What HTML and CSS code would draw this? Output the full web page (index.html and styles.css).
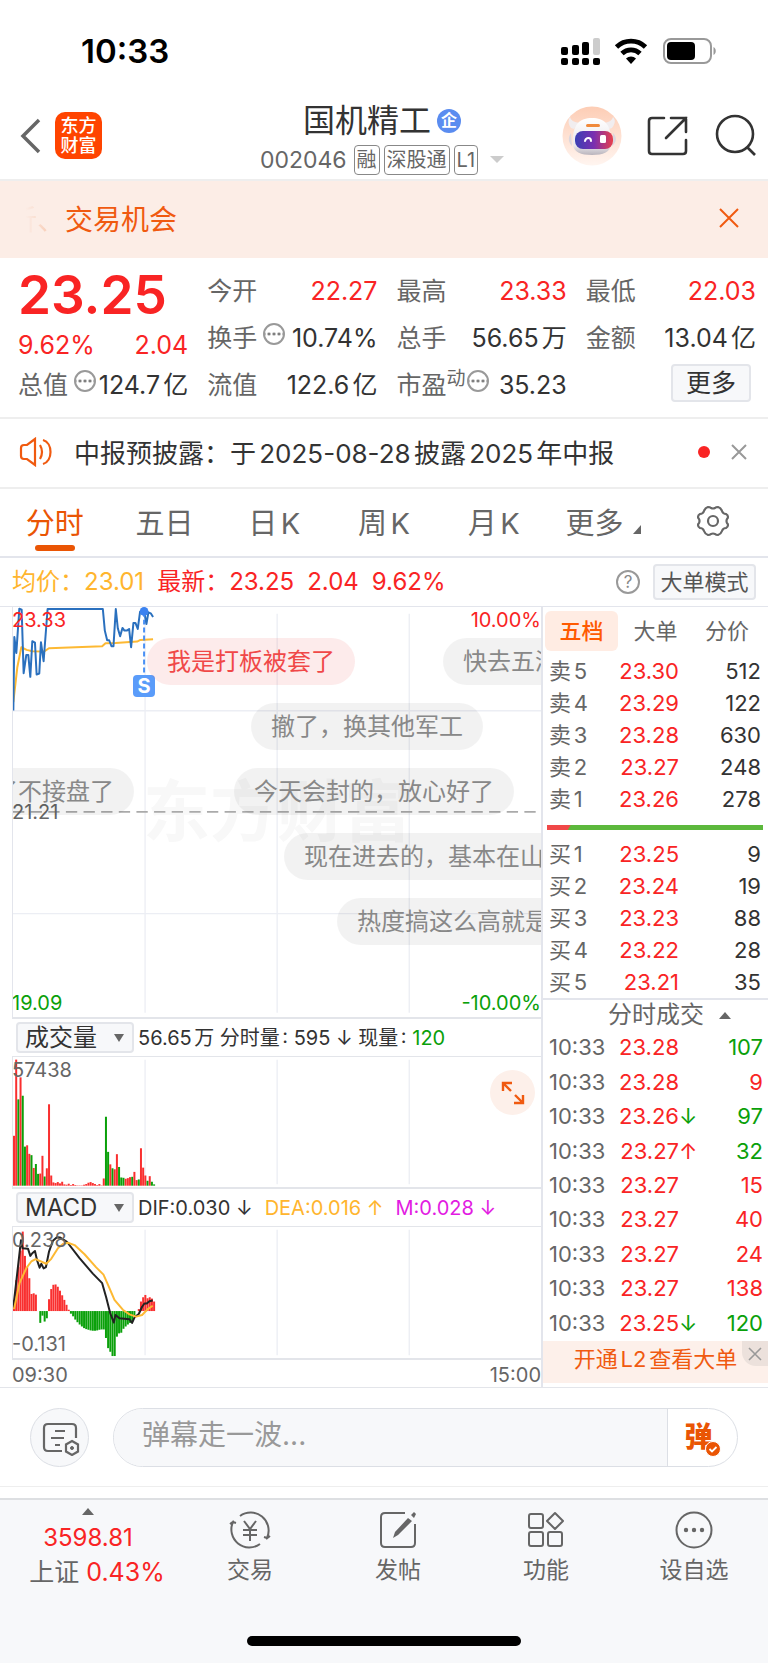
FILE: index.html
```html
<!DOCTYPE html>
<html lang="zh-CN">
<head>
  <meta charset="UTF-8">
  <meta name="viewport" content="width=device-width, initial-scale=1.0">
  <title>国机精工 002046</title>
  <link rel="stylesheet" href="styles.css">
</head>
<body>
  <div class="status-bar">
    <span class="clock">10:33</span>
    <svg class="status-icons" width="156" height="32" viewBox="0 0 156 32">
      <rect x="0" y="12" width="7" height="8" rx="2"/>
      <rect x="11" y="10" width="7" height="10" rx="2"/>
      <rect x="21" y="7" width="7" height="13" rx="2"/>
      <rect x="32" y="3" width="7" height="17" rx="2" fill="#ccc"/>
      <rect x="0" y="23" width="7" height="7" rx="2"/>
      <rect x="11" y="23" width="7" height="7" rx="2"/>
      <rect x="21" y="23" width="7" height="7" rx="2"/>
      <rect x="32" y="23" width="7" height="7" rx="2"/>
      <path d="M55.500 12a21 21 0 0 1 29 0M61 18.500a13 13 0 0 1 18 0" fill="none" stroke="#000" stroke-width="4.800"/>
      <path d="M65 23.500a7.500 7.500 0 0 1 10 0l-5 5.500z"/>
      <rect x="103" y="4" width="47" height="24" rx="7" fill="none" stroke="#999" stroke-width="2"/>
      <rect x="106" y="7" width="28" height="18" rx="4"/>
      <path d="M152.500 12c3 1.500 3 6.500 0 8z" fill="#999"/>
    </svg>
  </div>

  <header class="header">
    <a href="#" class="back" aria-label="返回">
      <svg width="22" height="36" viewBox="0 0 22 36"><path d="M19 2L3 18l16 16" fill="none" stroke="#666" stroke-width="3.500"/></svg>
    </a>
    <a href="#" class="logo"><span>东方</span><span>财富</span></a>
    <div class="title">
      <h1>国机精工 <span class="corp">企</span></h1>
      <div class="code">
        <span class="num">002046</span>
        <span class="tag">融</span>
        <span class="tag">深股通</span>
        <span class="tag">L1</span>
        <i class="caret"></i>
      </div>
    </div>
    <div class="header-actions">
      <button class="icon-btn" aria-label="智能助手">
        <svg width="60" height="60" viewBox="0 0 60 60">
          <defs>
            <linearGradient id="halo" x1="0" y1="0" x2="0" y2="1">
              <stop offset="0" stop-color="#fdcdb5"/>
              <stop offset="1" stop-color="#fff5f0"/>
            </linearGradient>
            <linearGradient id="visor" x1="0" y1="0" x2="1" y2="0">
              <stop offset="0" stop-color="#3a3fb4"/>
              <stop offset=".5" stop-color="#7a2fb0"/>
              <stop offset="1" stop-color="#e8404c"/>
            </linearGradient>
            <linearGradient id="shell" x1="0" y1="0" x2="0" y2="1">
              <stop offset="0" stop-color="#fff"/>
              <stop offset=".75" stop-color="#e9e6ea"/>
              <stop offset="1" stop-color="#b9b4bc"/>
            </linearGradient>
          </defs>
          <circle cx="30" cy="30" r="29.500" fill="url(#halo)"/>
          <path d="M9 22c-3-4-3-8-1-11 1 4 5 5 9 6l-5 6zM50 22c3-4 4-8 1-11-1 4-5 5-8 6l4 6z" fill="#f1edef"/>
          <path d="M11 38C10 18 18 12 30 12s20 6 19 26c0 8-8 11-19 11S11 46 11 38z" fill="url(#shell)"/>
          <path d="M9 27c-3 4-3 9 1 13zM51 27c4 4 4 9-1 13z" fill="#dcd7de"/>
          <rect x="24" y="18" width="14" height="3" rx="1.500" fill="#f08a3c"/>
          <rect x="13" y="25" width="38" height="18" rx="8" fill="url(#visor)"/>
          <path d="M23 35c1-4 6-4 6 0" fill="none" stroke="#fff" stroke-width="2" stroke-linecap="round"/>
          <rect x="38" y="29" width="6" height="8" rx="1.500" fill="#fff"/>
        </svg>
      </button>
      <button class="icon-btn" aria-label="分享">
        <svg width="44" height="44" viewBox="0 0 44 44"><path d="M18 4H6q-3 0-3 3v30q0 3 3 3h31q3 0 3-3V26M25 4h15v14M40 4L20 24" fill="none" stroke="#333" stroke-width="2.600" stroke-linecap="round"/></svg>
      </button>
      <button class="icon-btn" aria-label="搜索">
        <svg width="44" height="44" viewBox="0 0 44 44"><circle cx="21" cy="20" r="18" fill="none" stroke="#333" stroke-width="2.600"/><path d="M33 33l8 8" stroke="#333" stroke-width="2.600"/></svg>
      </button>
    </div>
  </header>

  <div class="promo">
    <p><span class="fade">析、</span>交易机会</p>
    <button class="icon-btn" aria-label="关闭">
      <svg width="20" height="20" viewBox="0 0 20 20"><path d="M1 1l18 18M19 1L1 19" stroke="#f05a10" stroke-width="2"/></svg>
    </button>
  </div>

  <section class="quote">
    <div class="quote-col">
      <div class="price">23.25</div>
      <div class="change"><span>9.62%</span><span>2.04</span></div>
      <dl class="pair"><dt>总值 <i class="dots"></i></dt><dd>124.7亿</dd></dl>
    </div>
    <div class="quote-col">
      <dl class="pair"><dt>今开</dt><dd class="red">22.27</dd></dl>
      <dl class="pair"><dt>换手 <i class="dots"></i></dt><dd>10.74%</dd></dl>
      <dl class="pair"><dt>流值</dt><dd>122.6亿</dd></dl>
    </div>
    <div class="quote-col">
      <dl class="pair"><dt>最高</dt><dd class="red">23.33</dd></dl>
      <dl class="pair"><dt>总手</dt><dd>56.65万</dd></dl>
      <dl class="pair"><dt>市盈<sup>动</sup><i class="dots"></i></dt><dd>35.23</dd></dl>
    </div>
    <div class="quote-col">
      <dl class="pair"><dt>最低</dt><dd class="red">22.03</dd></dl>
      <dl class="pair"><dt>金额</dt><dd>13.04亿</dd></dl>
      <button class="btn more-btn">更多</button>
    </div>
  </section>

  <div class="notice">
    <svg width="34" height="30" viewBox="0 0 34 30" fill="none" stroke="#f05a10" stroke-width="2.200">
      <path d="M17 2L9 8H6q-3 0-3 3v8q0 3 3 3h3l8 6zM22 8q4 7 0 14M25 3c10 3 10 21 0 24"/>
    </svg>
    <p>中报预披露：于2025-08-28披露2025年中报</p>
    <i class="dot"></i>
    <button class="icon-btn" aria-label="关闭公告">
      <svg width="16" height="16" viewBox="0 0 16 16"><path d="M1 1l14 14M15 1L1 15" stroke="#999" stroke-width="2"/></svg>
    </button>
  </div>

  <nav class="period">
    <button class="active">分时</button>
    <button>五日</button>
    <button>日K</button>
    <button>周K</button>
    <button>月K</button>
    <button>更多<i class="corner"></i></button>
    <button aria-label="设置">
      <svg width="34" height="32" viewBox="0 0 34 32" fill="none" stroke="#666" stroke-width="2.200" stroke-linejoin="round">
        <path d="M12 2q2 0 3 1 2 1 4 0 1-1 3-1 3 1 4 4 1 3 4 3 2 1 2 3 0 1-1 2-1 2 0 4 1 1 1 2 0 2-2 3-3 0-4 3-1 3-4 4-2 0-3-1-2-1-4 0-1 1-3 1-3-1-4-4-1-3-4-3-2-1-2-3 0-1 1-2 1-2 0-4-1-1-1-2 0-2 2-3 3 0 4-3 1-3 4-4z"/>
        <circle cx="17" cy="16" r="5"/>
      </svg>
    </button>
  </nav>

  <div class="summary">
    <span class="avg">均价：23.01</span>
    <span>最新：23.25</span>
    <span>2.04</span>
    <span>9.62%</span>
    <button class="help" aria-label="帮助">?</button>
    <button class="btn mode-btn">大单模式</button>
  </div>

  <main class="board">
    <div class="charts">
      <div class="chart price-chart">
        <div class="watermark">东方财富</div>
        <svg viewBox="0 0 1587 1233" preserveAspectRatio="none">
          <path class="grid" d="M397 20V1220M794 20V1220M1191 20V1220M0 312H1587M0 922H1587"/>
          <path class="mid" d="M0 616H1587"/>
          <polyline class="line avg-line" points="1,286 13,181 25,121 41,129 58,133 93,134 108,124 268,118 278,109 308,108 373,104 383,99 421,97"/>
          <polyline class="line price-line" points="1,311 4,90 10,138 19,5 26,8 32,199 40,144 46,144 52,210 58,103 66,107 71,203 79,200 84,106 92,163 104,6 270,6 276,71 283,100 289,100 296,118 302,118 309,6 315,64 322,88 329,63 335,71 342,71 349,66 355,121 362,48 368,48 375,66 382,14 394,12 401,51 407,16 414,19 421,30"/>
          <path class="trade-mark" d="M394 14V206"/>
          <circle cx="394" cy="13" r="13" fill="#3b82f0"/>
        </svg>
        <span class="axis top left red">23.33</span>
        <span class="axis top right red">10.00%</span>
        <span class="axis middle left">21.21</span>
        <span class="axis bottom left green">19.09</span>
        <span class="axis bottom right green">-10.00%</span>
        <span class="sell">S</span>
        <span class="bullet b1 mine">我是打板被套了</span>
        <span class="bullet b2">快去五洲新春</span>
        <span class="bullet b3">撤了，换其他军工</span>
        <span class="bullet b4">了不接盘了</span>
        <span class="bullet b5">今天会封的，放心好了</span>
        <span class="bullet b6">现在进去的，基本在山顶</span>
        <span class="bullet b7">热度搞这么高就是要跌</span>
      </div>

      <div class="toolbar">
        <div class="picker">
          <select aria-label="指标一"><option>成交量</option><option>成交额</option></select>
        </div>
        <span>56.65万 分时量: 595 ↓ 现量: <b class="green">120</b></span>
      </div>
      <div class="chart volume-chart">
        <svg viewBox="0 0 1587 396" preserveAspectRatio="none">
          <path class="grid" d="M397 8V388M794 8V388M1191 8V388"/>
          <g id="volumeBars"></g>
        </svg>
        <span class="axis top left">57438</span>
        <button class="expand" aria-label="全屏">
          <svg width="24" height="24" viewBox="0 0 24 24" fill="none" stroke="#f05a10" stroke-width="2.400"><path d="M2 10V2h9M2 2l8 8M22 14v8h-9M22 22l-8-8"/></svg>
        </button>
      </div>

      <div class="toolbar">
        <div class="picker">
          <select aria-label="指标二"><option>MACD</option><option>KDJ</option></select>
        </div>
        <span>DIF:0.030 ↓</span>
        <span class="avg">DEA:0.016 ↑</span>
        <span class="magenta">M:0.028 ↓</span>
      </div>
      <div class="chart macd-chart">
        <svg viewBox="0 0 1587 399" preserveAspectRatio="none">
          <path class="grid" d="M397 8V391M794 8V391M1191 8V391"/>
          <g id="macdBars"></g>
          <polyline class="line dif-line" points="1,245 10,165 24,40 29,65 45,66 52,88 58,80 66,73 72,100 80,124 85,112 92,126 99,122 108,76 120,42 132,31 142,32 162,45 200,95 240,142 268,171 280,214 292,262 303,291 308,268 320,278 350,281 358,292 366,274 378,265 388,243 395,233 402,233 410,226 420,224"/>
          <polyline class="line avg-line" points="3,250 20,170 40,125 55,105 68,98 100,112 115,97 135,65 150,52 165,48 185,55 215,83 250,123 272,145 285,175 305,222 330,252 350,266 370,273 388,268 405,250 420,240"/>
        </svg>
        <span class="axis top left">0.238</span>
        <span class="axis bottom left">-0.131</span>
      </div>
      <div class="times"><span>09:30</span><span>15:00</span></div>
    </div>

    <aside class="depth">
      <div class="depth-tabs">
        <button class="active">五档</button>
        <button>大单</button>
        <button>分价</button>
      </div>
      <table class="levels">
        <tr><th>卖5</th><td class="red">23.30</td><td></td><td>512</td></tr>
        <tr><th>卖4</th><td class="red">23.29</td><td></td><td>122</td></tr>
        <tr><th>卖3</th><td class="red">23.28</td><td></td><td>630</td></tr>
        <tr><th>卖2</th><td class="red">23.27</td><td></td><td>248</td></tr>
        <tr><th>卖1</th><td class="red">23.26</td><td></td><td>278</td></tr>
      </table>
      <div class="ratio"></div>
      <table class="levels">
        <tr><th>买1</th><td class="red">23.25</td><td></td><td>9</td></tr>
        <tr><th>买2</th><td class="red">23.24</td><td></td><td>19</td></tr>
        <tr><th>买3</th><td class="red">23.23</td><td></td><td>88</td></tr>
        <tr><th>买4</th><td class="red">23.22</td><td></td><td>28</td></tr>
        <tr><th>买5</th><td class="red">23.21</td><td></td><td>35</td></tr>
      </table>
      <h2 class="ticks-title">分时成交 <i class="up"></i></h2>
      <table class="ticks">
        <tr><th>10:33</th><td class="red">23.28</td><td></td><td class="green">107</td></tr>
        <tr><th>10:33</th><td class="red">23.28</td><td></td><td class="red">9</td></tr>
        <tr><th>10:33</th><td class="red">23.26</td><td class="green">↓</td><td class="green">97</td></tr>
        <tr><th>10:33</th><td class="red">23.27</td><td class="red">↑</td><td class="green">32</td></tr>
        <tr><th>10:33</th><td class="red">23.27</td><td></td><td class="red">15</td></tr>
        <tr><th>10:33</th><td class="red">23.27</td><td></td><td class="red">40</td></tr>
        <tr><th>10:33</th><td class="red">23.27</td><td></td><td class="red">24</td></tr>
        <tr><th>10:33</th><td class="red">23.27</td><td></td><td class="red">138</td></tr>
        <tr><th>10:33</th><td class="red">23.25</td><td class="green">↓</td><td class="green">120</td></tr>
      </table>
      <div class="level2">
        <a href="#">开通L2查看大单</a>
        <button class="level2-close" aria-label="关闭">
          <svg width="14" height="14" viewBox="0 0 14 14"><path d="M1 1l12 12M13 1L1 13" stroke="#999" stroke-width="1.600"/></svg>
        </button>
      </div>
    </aside>
  </main>

  <form class="comment">
    <button type="button" class="comment-set" aria-label="弹幕设置">
      <svg width="38" height="34" viewBox="0 0 38 34" fill="none" stroke="#666" stroke-width="2.200">
        <path d="M20 29H6q-4 0-4-4V6q0-4 4-4h24q4 0 4 4v10M13 9h10M9 16h13M13 23h5"/>
        <path d="M30 19l6 3.500v7L30 33l-6-3.500v-7z"/>
        <circle cx="30" cy="26" r="1.500" fill="#666" stroke-width="1"/>
      </svg>
    </button>
    <div class="comment-box">
      <input type="text" placeholder="弹幕走一波..." aria-label="弹幕">
      <button type="button" class="send" aria-label="弹幕开关">弹
        <svg width="16" height="16" viewBox="0 0 16 16"><circle cx="8" cy="8" r="7.500" fill="#ea5504" stroke="#fff"/><path d="M4.500 8l2.500 2.500 4.500-4.500" fill="none" stroke="#fff" stroke-width="1.800"/></svg>
      </button>
    </div>
  </form>

  <footer class="tabbar">
    <a href="#" class="index">
      <i class="up"></i>
      <span class="red">3598.81</span>
      <span class="index-row">上证 <span class="red">0.43%</span></span>
    </a>
    <a href="#">
      <svg width="44" height="40" viewBox="0 0 44 40" fill="none" stroke="#666" stroke-width="2">
        <path d="M12 6a18 18 0 0 1 27 22l-3-1M32 34A18 18 0 0 1 5 12l3 1M2 14l4-3M42 26l-4 3"/>
        <path d="M16 11l6 8 6-8M22 19v12M15 20h14M15 25h14"/>
      </svg>
      交易
    </a>
    <a href="#">
      <svg width="40" height="40" viewBox="0 0 40 40" fill="none" stroke="#666" stroke-width="2">
        <path d="M27 3H7Q3 3 3 7v26q0 4 4 4h26q4 0 4-4V14"/>
        <path d="M30 8l4 3-14 14-5 3 2-6zM33 5l3-3 2 2-2 4z" fill="#666" stroke="none"/>
      </svg>
      发帖
    </a>
    <a href="#">
      <svg width="38" height="40" viewBox="0 0 38 40" fill="none" stroke="#666" stroke-width="2">
        <rect x="2" y="4" width="14" height="14" rx="2"/>
        <rect x="2" y="22" width="14" height="14" rx="2"/>
        <rect x="21" y="22" width="14" height="14" rx="2"/>
        <path d="M28 3l8 8-8 8-8-8z" stroke-linejoin="round"/>
      </svg>
      功能
    </a>
    <a href="#">
      <svg width="40" height="40" viewBox="0 0 40 40"><circle cx="20" cy="20" r="17.500" fill="none" stroke="#666" stroke-width="2"/><g fill="#666"><circle cx="12" cy="20" r="2.200"/><circle cx="20" cy="20" r="2.200"/><circle cx="28" cy="20" r="2.200"/></g></svg>
      设自选
    </a>
    <div class="home-bar"></div>
  </footer>

  <script src="script.js"></script>
</body>
</html>
```

FILE: styles.css
```css
* {
  box-sizing: border-box;
}
body {
  margin: 0;
  font-family: Inter, "Noto Sans CJK SC", sans-serif;
  font-size: 22px;
  color: #333;
  background-color: #fff;
  text-autospace: normal;
}
h1, h2, p, dl, dd {
  margin: 0;
  font-weight: 400;
}
a {
  color: inherit;
  text-decoration: none;
}
button, input, select {
  font-family: inherit;
  font-size: inherit;
  color: inherit;
  margin: 0;
  padding: 0;
  border: none;
  background: none;
}
svg {
  display: block;
}
.red {
  color: #f92424;
}
.green {
  color: #0aa00a;
}
.avg {
  color: #ffb52e;
}
.magenta {
  color: #e21be2;
}
.icon-btn {
  display: flex;
}
.btn {
  background-color: #f7f8fa;
  border: 2px solid #e3e5ea;
  border-radius: 4px;
}

/* Status bar */
.status-bar {
  display: flex;
  justify-content: space-between;
  align-items: center;
  height: 92px;
  padding: 10px 51px 0 81px;
}
.clock {
  font-size: 33px;
  font-weight: 600;
  color: #000;
}

/* Header */
.header {
  display: grid;
  grid-template-columns: 1fr auto 1fr;
  grid-template-areas: "left title right";
  align-items: center;
  height: 89px;
  padding: 0 10px 0 20px;
  border-bottom: 2px solid #eee;
}
.back {
  grid-area: left;
}
.logo {
  grid-area: left;
  display: flex;
  flex-direction: column;
  justify-content: center;
  width: 47px;
  height: 47px;
  margin-left: 35px;
  border-radius: 10px;
  background-color: #ff4400;
  color: #fff;
  font-size: 18px;
  font-weight: 500;
  line-height: 20px;
  text-align: center;
}
.title {
  grid-area: title;
  padding: 4px 14px 0 0;
}
.title h1 {
  display: flex;
  justify-content: center;
  align-items: center;
  gap: 6px;
  font-size: 32px;
  line-height: 40px;
}
.corp {
  width: 24px;
  height: 24px;
  border-radius: 50%;
  background-color: #5a8cf0;
  color: #fff;
  font-size: 16px;
  font-weight: 700;
  line-height: 23px;
  text-align: center;
}
.code {
  display: flex;
  align-items: center;
  gap: 4px;
  padding-top: 4px;
  color: #666;
  line-height: 28px;
}
.code .num {
  font-size: 23px;
  margin-right: 3px;
}
.tag {
  padding: 0 2px;
  border: 1px solid #888;
  border-radius: 4px;
  font-size: 20px;
}
.caret {
  margin-left: 8px;
  border: 7px solid transparent;
  border-top-color: #ccc;
  border-bottom: none;
}
.header-actions {
  grid-area: right;
  display: flex;
  justify-content: flex-end;
  align-items: center;
  gap: 24px;
}

/* Promo */
.promo {
  display: flex;
  justify-content: space-between;
  align-items: center;
  height: 77px;
  padding: 0 29px 3px 9px;
  background-color: #fcede6;
  color: #f05a10;
  font-size: 28px;
}
.fade {
  background: linear-gradient(90deg, transparent 30%, #f7b795);
  background-clip: text;
  -webkit-background-clip: text;
  color: transparent;
}

/* Quote */
.quote {
  display: grid;
  grid-template-columns: repeat(4, 1fr);
  column-gap: 19px;
  height: 161px;
  padding: 10px 12px 0 18px;
  border-bottom: 2px solid #eee;
  font-size: 25px;
}
.price {
  height: 54px;
  font-size: 53px;
  font-weight: 600;
  line-height: 54px;
  color: #f92424;
}
.change {
  display: flex;
  justify-content: space-between;
  height: 40px;
  line-height: 46px;
  color: #f92424;
}
.pair {
  display: flex;
  justify-content: space-between;
  height: 47px;
  line-height: 47px;
  white-space: nowrap;
}
.pair dt {
  display: flex;
  color: #666;
}
.pair sup {
  font-size: 19px;
  line-height: 34px;
}
.dots {
  width: 22px;
  height: 22px;
  margin: 8px -2px 0 6px;
  border: 2px solid #999;
  border-radius: 50%;
  background: radial-gradient(circle, #777 1px, transparent 2px) 50% 50% / 5px 18px repeat-x;
}
.pair sup + .dots {
  margin-left: 1px;
}
.more-btn {
  display: block;
  width: 80px;
  height: 38px;
  margin: 2px 5px 0 auto;
  line-height: 31px;
}

/* Notice */
.notice {
  display: flex;
  align-items: center;
  height: 70px;
  padding: 0 21px 2px 18px;
  border-bottom: 2px solid #eee;
}
.notice p {
  flex: 1;
  padding-left: 22px;
  padding-bottom: 2px;
  font-size: 26px;
}
.dot {
  width: 12px;
  height: 12px;
  margin-right: 21px;
  border-radius: 50%;
  background-color: #f92424;
}

/* Period tabs */
.period {
  display: grid;
  grid-template-columns: repeat(7, 1fr);
  height: 69px;
  border-bottom: 2px solid #e3e5ec;
  font-size: 29px;
  color: #666;
}
.period button {
  position: relative;
  height: 67px;
  padding-bottom: 3px;
}
.period svg {
  margin: 0 auto;
}
.period .active {
  color: #ea5504;
}
.period .active::after {
  content: "";
  position: absolute;
  left: 50%;
  bottom: 5px;
  width: 40px;
  height: 6px;
  margin-left: -20px;
  border-radius: 3px;
  background-color: #ea5504;
}
.corner {
  display: inline-block;
  margin-left: 10px;
  border-left: 8px solid transparent;
  border-bottom: 9px solid #666;
}

/* Summary */
.summary {
  display: flex;
  align-items: center;
  gap: 13px;
  height: 48px;
  padding: 0 12px;
  font-size: 24px;
  line-height: 48px;
  color: #f92424;
}
.help {
  width: 24px;
  height: 24px;
  margin-left: auto;
  border: 2px solid #999;
  border-radius: 50%;
  font-size: 17px;
  line-height: 18px;
  color: #888;
}
.mode-btn {
  width: 103px;
  height: 36px;
  font-size: 22px;
  line-height: 29px;
  color: #555;
}

/* Charts */
.board {
  display: grid;
  grid-template-columns: 1fr 227px;
  border-top: 1px solid #e3e5ec;
  border-bottom: 1px solid #e3e5ea;
}
.charts {
  min-width: 0;
  padding-left: 12px;
}
.chart {
  position: relative;
  overflow: hidden;
  border-left: 1px solid #e3e5ec;
  border-bottom: 2px solid #e3e5ea;
}
.chart svg {
  width: 100%;
  height: 100%;
}
.price-chart {
  height: 412px;
}
.volume-chart {
  height: 133px;
}
.macd-chart {
  height: 134px;
}
.volume-chart,
.macd-chart {
  border-top: 1px solid #e3e5ea;
}
.grid {
  stroke: #eceef4;
  stroke-width: 4;
  fill: none;
}
.mid {
  stroke: #aaa;
  stroke-width: 5;
  stroke-dasharray: 34 19;
}
.line {
  fill: none;
  stroke-width: 6;
  stroke-linejoin: round;
}
.price-line {
  stroke: #2a70be;
}
.avg-line {
  stroke: #fdb933;
}
.dif-line {
  stroke: #222;
}
.trade-mark {
  stroke: #4a90f5;
  stroke-width: 6;
  stroke-dasharray: 15 9;
}
.up-bar {
  fill: #f92f2f;
}
.down-bar {
  fill: #0aa00a;
}
.watermark {
  position: absolute;
  left: 130px;
  top: 160px;
  font-size: 67px;
  font-weight: 700;
  line-height: 90px;
  color: #f8f8f8;
}
.price-chart svg {
  position: relative;
}
.axis {
  position: absolute;
  font-size: 20px;
  line-height: 24px;
}
.axis:not(.red):not(.green) {
  color: #666;
}
.top {
  top: 1px;
}
.middle {
  top: 193px;
}
.bottom {
  bottom: 2px;
}
.left {
  left: -1px;
}
.right {
  right: 0;
}
.sell {
  position: absolute;
  left: 120px;
  top: 68px;
  width: 22px;
  height: 22px;
  border-radius: 4px;
  background-color: #5a9cfa;
  color: #fff;
  font-size: 20px;
  font-weight: 700;
  line-height: 22px;
  text-align: center;
}
.bullet {
  position: absolute;
  height: 47px;
  padding: 0 20px;
  border-radius: 24px;
  background-color: rgba(0, 0, 0, 0.05);
  color: #888;
  font-size: 24px;
  line-height: 47px;
  white-space: nowrap;
}
.mine {
  background-color: rgba(240, 60, 60, 0.1);
  color: #f04848;
}
.b1, .b2 {
  top: 31px;
}
.b1 {
  left: 134px;
}
.b2 {
  left: 430px;
}
.b3 {
  top: 96px;
  left: 238px;
}
.b4, .b5 {
  top: 161px;
}
.b4 {
  left: -39px;
}
.b5 {
  left: 221px;
}
.b6 {
  top: 226px;
  left: 271px;
}
.b7 {
  top: 291px;
  left: 324px;
}
.toolbar {
  display: flex;
  align-items: center;
  gap: 12px;
  height: 37px;
  padding-left: 4px;
  font-size: 20px;
  line-height: 30px;
  white-space: nowrap;
}
.toolbar b {
  font-weight: 400;
}
.picker {
  position: relative;
  margin-right: -8px;
}
.picker::after {
  content: "";
  position: absolute;
  right: 10px;
  top: 12px;
  border: 5px solid transparent;
  border-top: 8px solid #666;
  border-bottom: none;
}
.picker select {
  appearance: none;
  display: block;
  width: 118px;
  height: 31px;
  padding-left: 7px;
  border: 2px solid #e3e5ea;
  border-radius: 4px;
  background-color: #f7f8fa;
  font-size: 24px;
  line-height: 27px;
}
.expand {
  position: absolute;
  right: 6px;
  top: 13px;
  display: flex;
  justify-content: center;
  align-items: center;
  width: 45px;
  height: 45px;
  border-radius: 50%;
  background-color: #fdf0ea;
}
.expand svg {
  width: 24px;
  height: 24px;
}
.times {
  display: flex;
  justify-content: space-between;
  height: 27px;
  line-height: 30px;
  font-size: 20px;
  color: #666;
}

/* Depth */
.depth {
  display: flex;
  flex-direction: column;
  border-left: 2px solid #e3e5ec;
}
.depth-tabs {
  display: flex;
  justify-content: space-between;
  height: 48px;
  padding: 4px 7px 4px 2px;
  color: #666;
}
.depth-tabs button {
  width: 68px;
  padding-bottom: 5px;
}
.depth-tabs .active {
  width: 73px;
  border-radius: 6px;
  background-color: #ffece3;
  color: #ff5a00;
  font-weight: 500;
}
table {
  table-layout: fixed;
  width: 100%;
  padding: 0 7px 0 6px;
  border-spacing: 0;
  font-size: 22px;
}
th, td {
  padding: 0;
  text-align: right;
  line-height: 30px;
}
th {
  width: 60px;
  font-weight: 400;
  text-align: left;
  color: #666;
}
td:nth-child(2) {
  width: 70px;
}
td:nth-child(3) {
  width: 15px;
}
.levels tr {
  height: 32px;
}
.ratio {
  height: 5px;
  margin: 10px 5px 8px 4px;
  background: linear-gradient(120deg, #f04848 20px, #5cb83c 21px);
}
.ticks-title {
  display: flex;
  justify-content: center;
  align-items: center;
  gap: 15px;
  height: 32px;
  padding-left: 28px;
  border-top: 2px solid #e3e5ec;
  font-size: 24px;
  line-height: 28px;
  color: #666;
}
.ticks {
  flex: 1;
  height: 311px;
  padding: 0 5px 1px 6px;
}
.up {
  border: 6px solid transparent;
  border-top: none;
  border-bottom: 7px solid #666;
}
.level2 {
  position: relative;
  height: 42px;
  margin-bottom: 4px;
  background-color: #fdf0ea;
  color: #f05a10;
  line-height: 37px;
  text-align: center;
}
.level2-close {
  position: absolute;
  top: 0;
  right: 0;
  display: flex;
  justify-content: center;
  align-items: center;
  width: 26px;
  height: 25px;
  border-bottom-left-radius: 14px;
  background-color: #ece1dc;
}

/* Comment */
.comment {
  display: flex;
  align-items: center;
  gap: 24px;
  height: 99px;
  padding: 0 30px;
  border-bottom: 1px solid #eee;
}
.comment-set {
  display: flex;
  justify-content: center;
  align-items: center;
  width: 59px;
  height: 59px;
  padding: 4px 0 0 3px;
  border: 1px solid #dcdfe5;
  border-radius: 50%;
  background-color: #f7f8fa;
}
.comment-box {
  flex: 1;
  display: flex;
  height: 59px;
  border: 1px solid #dcdfe5;
  border-radius: 30px;
  overflow: hidden;
}
.comment-box input {
  flex: 1;
  min-width: 0;
  padding: 0 0 4px 28px;
  background-color: #f7f8fa;
  font-size: 28px;
  text-autospace: no-autospace;
}
.comment-box input::placeholder {
  color: #999;
}
.send {
  position: relative;
  width: 70px;
  padding: 0 8px 4px 0;
  border-left: 1px solid #dcdfe5;
  color: #ea5504;
  font-size: 28px;
  font-weight: 900;
}
.send svg {
  position: absolute;
  left: 37px;
  top: 32px;
}

/* Tab bar */
.tabbar {
  position: relative;
  display: grid;
  grid-template-columns: 176px repeat(4, 1fr);
  height: 165px;
  margin-top: 11px;
  border-top: 2px solid #dddfe2;
  background-color: #f7f8fa;
  color: #666;
  font-size: 23px;
}
.tabbar > a {
  display: flex;
  flex-direction: column;
  align-items: center;
  padding-top: 10px;
  line-height: 40px;
}
.tabbar .index {
  padding-top: 8px;
  line-height: 35px;
  font-size: 25px;
}
.index > .red {
  padding-top: 5px;
  font-size: 24px;
}
.index-row {
  white-space: nowrap;
  padding-left: 18px;
}
.home-bar {
  position: absolute;
  left: 50%;
  bottom: 17px;
  width: 274px;
  height: 10px;
  margin-left: -137px;
  border-radius: 5px;
  background-color: #000;
}
```

FILE: script.js
```js
// One entry per minute: bar height, green when the colour string has a 'g'
const volume = [152, 384, 263, 330, 274, 119, 123, 97, 93, 54, 66, 36, 37, 91, 28, 53, 248, 31, 10, 8, 11, 7, 12, 4, 3, 6, 2, 5, 2, 1, 1, 1, 3, 5, 9, 11, 8, 5, 2, 5, 1, 22, 210, 103, 65, 53, 50, 96, 57, 25, 24, 21, 23, 26, 27, 42, 17, 19, 114, 55, 31, 15, 29, 12, 4];
const volumeColor = 'rrgrggrrgrggrrgrrrrrrrrrrrrrrrrrrrrrrrrrrrggrgrrgggrrrgrrgrrrgrgg';
const macd = [34, 94, 134, 184, 242, 168, 134, 100, 52, 54, 50, 0, -36, -14, -32, -22, 36, 67, 80, 81, 74, 62, 48, 34, 19, 4, -8, -16, -26, -34, -41, -47, -52, -55, -57, -59, -60, -60, -59, -57, -56, -56, -82, -113, -124, -137, -137, -78, -68, -66, -54, -47, -41, -36, -31, -14, 0, 6, 29, 42, 49, 39, 42, 38, 29];

function drawBars(id, values, base, isDown) {
  const group = document.getElementById(id);
  values.forEach((v, i) => {
    const rect = document.createElementNS('http://www.w3.org/2000/svg', 'rect');
    rect.setAttribute('x', (i * 6.58).toFixed(1));
    rect.setAttribute('y', v > 0 ? base - v : base);
    rect.setAttribute('width', 6);
    rect.setAttribute('height', Math.abs(v));
    rect.setAttribute('class', isDown(v, i) ? 'down-bar' : 'up-bar');
    group.appendChild(rect);
  });
}

drawBars('volumeBars', volume, 392, (v, i) => volumeColor[i] === 'g');
drawBars('macdBars', macd, 256, v => v < 0);
```
